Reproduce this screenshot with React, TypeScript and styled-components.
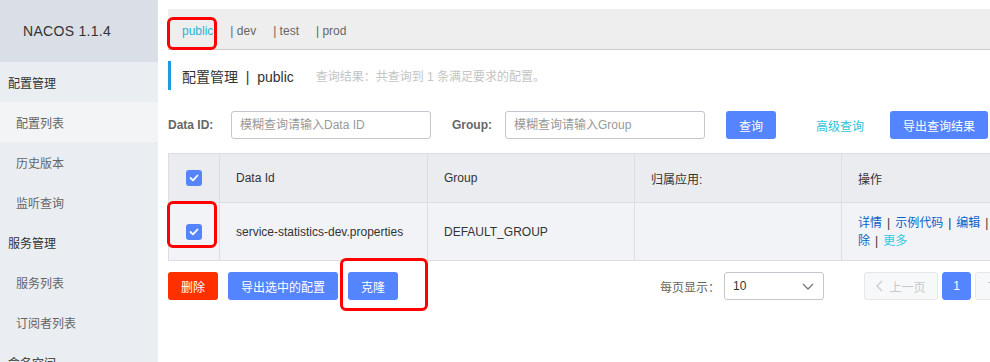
import React from "react";
import styled, { createGlobalStyle } from "styled-components";

const GlobalStyle = createGlobalStyle`
  html, body {
    margin: 0;
    padding: 0;
    background: #fff;
  }
  body {
    font-family: "Liberation Sans", "Noto Sans CJK SC", sans-serif;
    font-size: 12px;
    color: #333;
  }
`;

const Page = styled.div`
  display: flex;
  width: 990px;
  height: 362px;
  overflow: hidden;
`;

const Sidebar = styled.aside`
  width: 158px;
  flex-shrink: 0;
  background: #eaedf1;
`;

const Brand = styled.div`
  height: 62px;
  display: flex;
  align-items: center;
  padding-left: 23px;
  background: #dadee6;
  font-size: 14px;
  color: #333;
  letter-spacing: 0.3px;
`;

const MenuItem = styled.div<{ $section?: boolean; $active?: boolean }>`
  height: 40px;
  display: flex;
  align-items: center;
  padding-left: ${(p) => (p.$section ? 8 : 16)}px;
  font-size: 12px;
  color: ${(p) => (p.$section ? "#333" : "#666")};
  background: ${(p) => (p.$active ? "#f3f4f6" : "transparent")};
`;

const Main = styled.main`
  position: relative;
  flex: 1;
  min-width: 0;
  padding: 9px 0 0 10px;
  overflow: hidden;
`;

const NamespaceBar = styled.div`
  height: 41px;
  display: flex;
  align-items: center;
  padding: 4px 0 0 14px;
  box-sizing: border-box;
  background: #eee;
  border-bottom: 1px solid #ccc;
  width: 900px;
`;

const Namespace = styled.span<{ $current?: boolean }>`
  margin-right: 17px;
  font-size: 12px;
  color: ${(p) => (p.$current ? "#1fb6d6" : "#666")};
`;

const TitleRow = styled.div`
  margin-top: 11px;
  height: 29px;
  display: flex;
  align-items: center;
  border-left: 3px solid #1f9be0;
  padding-left: 11px;
`;

const Title = styled.span`
  font-size: 14px;
  color: #333;
`;

const Hint = styled.span`
  margin-left: 22px;
  font-size: 12px;
  color: #c4c4c4;
`;

const SearchRow = styled.div`
  margin-top: 21px;
  height: 28px;
  display: flex;
  align-items: center;
`;

const Label = styled.label<{ $width: number; $gap?: number }>`
  width: ${(p) => p.$width}px;
  margin-left: ${(p) => p.$gap ?? 0}px;
  font-weight: bold;
  font-size: 12px;
  color: #666;
  flex-shrink: 0;
`;

const Input = styled.input`
  width: 200px;
  height: 28px;
  flex-shrink: 0;
  box-sizing: border-box;
  border: 1px solid #c4c6cf;
  border-radius: 3px;
  padding: 0 8px;
  font-family: inherit;
  font-size: 12px;
  outline: none;
  &::placeholder {
    color: #999;
  }
`;

const Button = styled.button<{ $width: number; $danger?: boolean; $gap?: number }>`
  width: ${(p) => p.$width}px;
  height: 28px;
  margin-left: ${(p) => p.$gap ?? 0}px;
  border: none;
  border-radius: 3px;
  background: ${(p) => (p.$danger ? "#ff3000" : "#5584ff")};
  color: #fff;
  font-family: inherit;
  font-size: 12px;
  padding: 0;
  flex-shrink: 0;
`;

const LinkText = styled.span<{ $gap?: number }>`
  margin-left: ${(p) => p.$gap ?? 0}px;
  color: #2ec3dc;
  font-size: 12px;
  flex-shrink: 0;
`;

const Table = styled.table`
  margin-top: 14px;
  border-collapse: collapse;
  table-layout: fixed;
  width: 861px;
`;

const Col = styled.col<{ $width: number }>`
  width: ${(p) => p.$width}px;
`;

const Th = styled.th`
  height: 48px;
  background: #ebecf0;
  border: 1px solid #dcdee3;
  padding: 0 16px;
  text-align: left;
  font-weight: normal;
  font-size: 12px;
  color: #333;
`;

const Td = styled.td`
  height: 57px;
  background: #f2f3f7;
  border: 1px solid #dcdee3;
  padding: 0 16px;
  font-size: 12px;
  color: #333;
  line-height: 18px;
`;

const CheckTd = styled(Td)`
  padding: 0;
`;

const CheckTh = styled(Th)`
  padding: 0;
`;

const CheckCell = styled.div`
  display: flex;
  justify-content: center;
  padding-right: 1px;
`;

const CheckBox = styled.span`
  display: inline-flex;
  align-items: center;
  justify-content: center;
  width: 16px;
  height: 16px;
  border-radius: 3px;
  background: #5584ff;
`;

const Action = styled.span<{ $more?: boolean }>`
  color: ${(p) => (p.$more ? "#2ec8e2" : "#0a62c8")};
`;

const Sep = styled.span`
  margin: 0 5px;
  color: #333;
`;

const Footer = styled.div`
  margin-top: 11px;
  height: 28px;
  display: flex;
  align-items: center;
`;

const PageSizeLabel = styled.span`
  margin-left: 262px;
  width: 64px;
  color: #666;
  font-size: 12px;
  flex-shrink: 0;
`;

const Select = styled.div`
  width: 100px;
  height: 28px;
  box-sizing: border-box;
  flex-shrink: 0;
  border: 1px solid #c4c6cf;
  border-radius: 3px;
  display: flex;
  align-items: center;
  justify-content: space-between;
  padding: 0 9px 0 8px;
  font-size: 12px;
  color: #333;
`;

const PageButton = styled.div<{ $width: number; $current?: boolean; $gap: number }>`
  width: ${(p) => p.$width}px;
  height: 28px;
  margin-left: ${(p) => p.$gap}px;
  box-sizing: border-box;
  flex-shrink: 0;
  border-radius: 3px;
  display: flex;
  align-items: center;
  justify-content: center;
  gap: 6px;
  font-size: 12px;
  background: ${(p) => (p.$current ? "#5584ff" : "#f7f8fa")};
  border: 1px solid ${(p) => (p.$current ? "#5584ff" : "#e6e7eb")};
  color: ${(p) => (p.$current ? "#fff" : "#c8c8c8")};
`;

const Highlight = styled.div<{ $x: number; $y: number; $w: number; $h: number }>`
  position: absolute;
  left: ${(p) => p.$x}px;
  top: ${(p) => p.$y}px;
  width: ${(p) => p.$w}px;
  height: ${(p) => p.$h}px;
  box-sizing: border-box;
  border: 3px solid #ff0000;
  border-radius: 6px;
  pointer-events: none;
`;

const Check = () => (
  <svg width="10" height="8" viewBox="0 0 10 8">
    <polyline points="1.5,4 4,6.3 8.5,1.5" fill="none" stroke="#fff" strokeWidth="1.8" strokeLinecap="round" strokeLinejoin="round" />
  </svg>
);

const Chevron = ({ dir, color }: { dir: "down" | "left" | "right"; color: string }) => {
  const pts = dir === "down" ? "1,2 6,7 11,2" : dir === "left" ? "6,1 1,6 6,11" : "1,1 6,6 1,11";
  const size = dir === "down" ? { w: 12, h: 9 } : { w: 7, h: 12 };
  return (
    <svg width={size.w} height={size.h} viewBox={`0 0 ${size.w} ${size.h}`}>
      <polyline points={pts} fill="none" stroke={color} strokeWidth="1.3" />
    </svg>
  );
};

const menu = [
  { label: "配置管理", section: true },
  { label: "配置列表", active: true },
  { label: "历史版本" },
  { label: "监听查询" },
  { label: "服务管理", section: true },
  { label: "服务列表" },
  { label: "订阅者列表" },
  { label: "命名空间", section: true },
];

export default function App() {
  return (
    <Page>
      <GlobalStyle />
      <Sidebar>
        <Brand>NACOS 1.1.4</Brand>
        {menu.map((m) => (
          <MenuItem key={m.label} $section={m.section} $active={m.active}>
            {m.label}
          </MenuItem>
        ))}
      </Sidebar>
      <Main>
        <NamespaceBar>
          <Namespace $current>public</Namespace>
          <Namespace>| dev</Namespace>
          <Namespace>| test</Namespace>
          <Namespace>| prod</Namespace>
        </NamespaceBar>
        <TitleRow>
          <Title>配置管理 &nbsp;|&nbsp; public</Title>
          <Hint>查询结果：共查询到 1 条满足要求的配置。</Hint>
        </TitleRow>
        <SearchRow>
          <Label $width={63}>Data ID:</Label>
          <Input placeholder="模糊查询请输入Data ID" />
          <Label $width={53} $gap={21}>Group:</Label>
          <Input placeholder="模糊查询请输入Group" />
          <Button $width={50} $gap={21}>查询</Button>
          <LinkText $gap={40}>高级查询</LinkText>
          <Button $width={98} $gap={26}>导出查询结果</Button>
        </SearchRow>
        <Table>
          <colgroup>
            <Col $width={51} />
            <Col $width={208} />
            <Col $width={207} />
            <Col $width={207} />
            <Col $width={188} />
          </colgroup>
          <thead>
            <tr>
              <CheckTh>
                <CheckCell>
                  <CheckBox><Check /></CheckBox>
                </CheckCell>
              </CheckTh>
              <Th>Data Id</Th>
              <Th>Group</Th>
              <Th>归属应用:</Th>
              <Th>操作</Th>
            </tr>
          </thead>
          <tbody>
            <tr>
              <CheckTd>
                <CheckCell>
                  <CheckBox><Check /></CheckBox>
                </CheckCell>
              </CheckTd>
              <Td>service-statistics-dev.properties</Td>
              <Td>DEFAULT_GROUP</Td>
              <Td></Td>
              <Td>
                <Action>详情</Action>
                <Sep>|</Sep>
                <Action>示例代码</Action>
                <Sep>|</Sep>
                <Action>编辑</Action>
                <Sep>|</Sep>
                <Action>删除</Action>
                <Sep>|</Sep>
                <Action $more>更多</Action>
              </Td>
            </tr>
          </tbody>
        </Table>
        <Footer>
          <Button $width={50} $danger>删除</Button>
          <Button $width={110} $gap={10}>导出选中的配置</Button>
          <Button $width={50} $gap={10}>克隆</Button>
          <PageSizeLabel>每页显示：</PageSizeLabel>
          <Select>
            <span>10</span>
            <Chevron dir="down" color="#777" />
          </Select>
          <PageButton $width={74} $gap={40}>
            <Chevron dir="left" color="#ccc" />
            <span>上一页</span>
          </PageButton>
          <PageButton $width={29} $gap={4} $current>1</PageButton>
          <PageButton $width={74} $gap={4}>
            <span>下一页</span>
            <Chevron dir="right" color="#ccc" />
          </PageButton>
        </Footer>
        <Highlight $x={9} $y={17} $w={50} $h={33} />
        <Highlight $x={9} $y={201} $w={50} $h={47} />
        <Highlight $x={182} $y={258} $w={88} $h={53} />
      </Main>
    </Page>
  );
}
